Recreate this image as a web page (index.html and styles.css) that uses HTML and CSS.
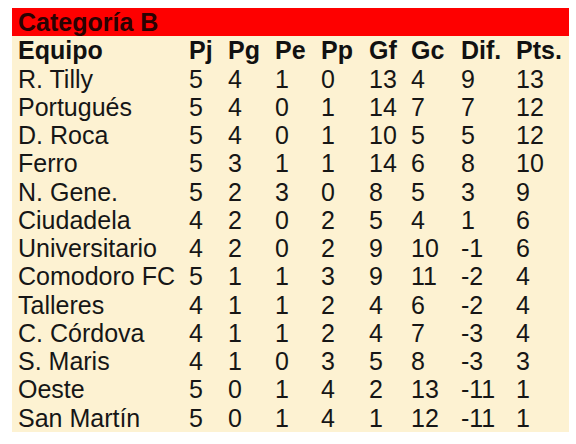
FILE: index.html
```html
<!DOCTYPE html>
<html lang="es">
<head>
<meta charset="utf-8">
<title>Categoría B</title>
<link rel="stylesheet" href="styles.css">
</head>
<body>
<table class="standings">
  <colgroup>
    <col class="c-team"><col class="c-pj"><col class="c-pg"><col class="c-pe"><col class="c-pp"><col class="c-gf"><col class="c-gc"><col class="c-dif"><col class="c-pts">
  </colgroup>
  <thead>
    <tr class="title"><th colspan="9">Categoría B</th></tr>
    <tr class="head"><th>Equipo</th><th>Pj</th><th>Pg</th><th>Pe</th><th>Pp</th><th>Gf</th><th>Gc</th><th>Dif.</th><th>Pts.</th></tr>
  </thead>
  <tbody>
    <tr><td>R. Tilly</td><td>5</td><td>4</td><td>1</td><td>0</td><td>13</td><td>4</td><td>9</td><td>13</td></tr>
    <tr><td>Portugués</td><td>5</td><td>4</td><td>0</td><td>1</td><td>14</td><td>7</td><td>7</td><td>12</td></tr>
    <tr><td>D. Roca</td><td>5</td><td>4</td><td>0</td><td>1</td><td>10</td><td>5</td><td>5</td><td>12</td></tr>
    <tr><td>Ferro</td><td>5</td><td>3</td><td>1</td><td>1</td><td>14</td><td>6</td><td>8</td><td>10</td></tr>
    <tr><td>N. Gene.</td><td>5</td><td>2</td><td>3</td><td>0</td><td>8</td><td>5</td><td>3</td><td>9</td></tr>
    <tr><td>Ciudadela</td><td>4</td><td>2</td><td>0</td><td>2</td><td>5</td><td>4</td><td>1</td><td>6</td></tr>
    <tr><td>Universitario</td><td>4</td><td>2</td><td>0</td><td>2</td><td>9</td><td>10</td><td>-1</td><td>6</td></tr>
    <tr><td>Comodoro FC</td><td>5</td><td>1</td><td>1</td><td>3</td><td>9</td><td>11</td><td>-2</td><td>4</td></tr>
    <tr><td>Talleres</td><td>4</td><td>1</td><td>1</td><td>2</td><td>4</td><td>6</td><td>-2</td><td>4</td></tr>
    <tr><td>C. Córdova</td><td>4</td><td>1</td><td>1</td><td>2</td><td>4</td><td>7</td><td>-3</td><td>4</td></tr>
    <tr><td>S. Maris</td><td>4</td><td>1</td><td>0</td><td>3</td><td>5</td><td>8</td><td>-3</td><td>3</td></tr>
    <tr><td>Oeste</td><td>5</td><td>0</td><td>1</td><td>4</td><td>2</td><td>13</td><td>-11</td><td>1</td></tr>
    <tr><td>San Martín</td><td>5</td><td>0</td><td>1</td><td>4</td><td>1</td><td>12</td><td>-11</td><td>1</td></tr>
  </tbody>
</table>
</body>
</html>
```
FILE: styles.css
```css
html, body {
  margin: 0;
  background: #ffffff;
}
body {
  padding: 8px 0 0 12px;
  font-family: "Liberation Sans", Arial, sans-serif;
  font-size: 25px;
  color: #161616;
}
.standings {
  width: 557px;
  table-layout: fixed;
  border-collapse: collapse;
  border-spacing: 0;
  background: #fdf2d2;
}
.c-team { width: 177px; }
.c-pj { width: 39px; }
.c-pg { width: 47px; }
.c-pe { width: 46px; }
.c-pp { width: 48px; }
.c-gf { width: 42px; }
.c-gc { width: 50px; }
.c-dif { width: 55px; }
.c-pts { width: 53px; }
.standings th,
.standings td {
  padding: 0;
  height: 28.27px;
  line-height: 28.27px;
  text-align: left;
  white-space: nowrap;
  font-weight: normal;
  vertical-align: middle;
}
.standings th:first-child,
.standings td:first-child {
  padding-left: 6px;
}
.title th {
  background: #fe0000;
  color: #2a0202;
  font-weight: bold;
}
.head th {
  font-weight: bold;
  color: #111111;
}
```
